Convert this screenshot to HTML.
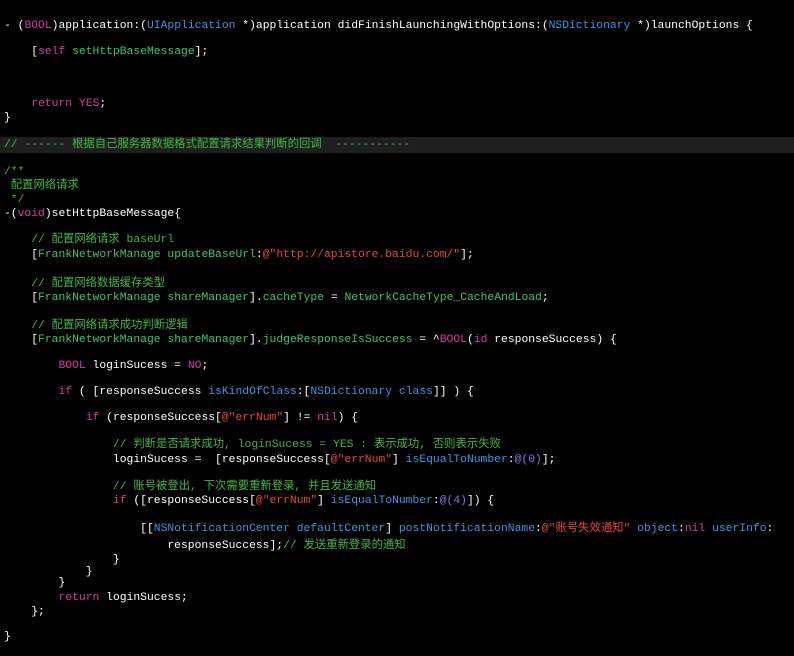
<!DOCTYPE html>
<html><head><meta charset="utf-8"><style>
body{margin:0;background:#000;width:794px;height:656px;overflow:hidden;position:relative;}
.l{position:absolute;left:4px;height:14px;line-height:14px;white-space:pre;font-family:"Liberation Mono","Noto Sans CJK SC",monospace;font-size:11.35px;color:#fff;}
.k{color:#d23d9e}.m{color:#3ec46f}.c{color:#41b645}.t{color:#3a95e0}.s{color:#e4463a}.n{color:#8b6fe0}
.band{position:absolute;left:0;top:137px;width:794px;height:16px;background:#1f1f1f;}
</style></head><body>
<div class="band"></div>
<div class="l" style="top:19px">- (<span class="k">BOOL</span>)application:(<span class="t">UIApplication</span> *)application didFinishLaunchingWithOptions:(<span class="t">NSDictionary</span> *)launchOptions {</div>
<div class="l" style="top:45px">    [<span class="k">self</span> <span class="m">setHttpBaseMessage</span>];</div>
<div class="l" style="top:97px">    <span class="k">return</span> <span class="k">YES</span>;</div>
<div class="l" style="top:111px">}</div>
<div class="l c" style="top:138px">// ------ 根据自己服务器数据格式配置请求结果判断的回调  -----------</div>
<div class="l c" style="top:165px">/**</div>
<div class="l c" style="top:179px"> 配置网络请求</div>
<div class="l c" style="top:193px"> */</div>
<div class="l" style="top:207px">-(<span class="k">void</span>)setHttpBaseMessage{</div>
<div class="l c" style="top:233px">    // 配置网络请求 baseUrl</div>
<div class="l" style="top:248px">    [<span class="m">FrankNetworkManage</span> <span class="m">updateBaseUrl</span>:<span class="s">@"http://apistore.baidu.com/"</span>];</div>
<div class="l c" style="top:277px">    // 配置网络数据缓存类型</div>
<div class="l" style="top:291px">    [<span class="m">FrankNetworkManage</span> <span class="m">shareManager</span>].<span class="m">cacheType</span> = <span class="m">NetworkCacheType_CacheAndLoad</span>;</div>
<div class="l c" style="top:319px">    // 配置网络请求成功判断逻辑</div>
<div class="l" style="top:333px">    [<span class="m">FrankNetworkManage</span> <span class="m">shareManager</span>].<span class="m">judgeResponseIsSuccess</span> = ^<span class="k">BOOL</span>(<span class="k">id</span> responseSuccess) {</div>
<div class="l" style="top:359px">        <span class="k">BOOL</span> loginSucess = <span class="k">NO</span>;</div>
<div class="l" style="top:385px">        <span class="k">if</span> ( [responseSuccess <span class="t">isKindOfClass</span>:[<span class="t">NSDictionary</span> <span class="t">class</span>]] ) {</div>
<div class="l" style="top:411px">            <span class="k">if</span> (responseSuccess[<span class="s">@"errNum"</span>] != <span class="k">nil</span>) {</div>
<div class="l c" style="top:438px">                // 判断是否请求成功, loginSucess = YES : 表示成功, 否则表示失败</div>
<div class="l" style="top:453px">                loginSucess =  [responseSuccess[<span class="s">@"errNum"</span>] <span class="t">isEqualToNumber</span>:<span class="n">@(0)</span>];</div>
<div class="l c" style="top:480px">                // 账号被登出, 下次需要重新登录, 并且发送通知</div>
<div class="l" style="top:494px">                <span class="k">if</span> ([responseSuccess[<span class="s">@"errNum"</span>] <span class="t">isEqualToNumber</span>:<span class="n">@(4)</span>]) {</div>
<div class="l" style="top:522px">                    [[<span class="t">NSNotificationCenter</span> <span class="t">defaultCenter</span>] <span class="t">postNotificationName</span>:<span class="s">@"账号失效通知"</span> <span class="t">object</span>:<span class="k">nil</span> <span class="t">userInfo</span>:</div>
<div class="l" style="top:539px">                        responseSuccess];<span class="c">// 发送重新登录的通知</span></div>
<div class="l" style="top:553px">                }</div>
<div class="l" style="top:565px">            }</div>
<div class="l" style="top:576px">        }</div>
<div class="l" style="top:591px">        <span class="k">return</span> loginSucess;</div>
<div class="l" style="top:605px">    };</div>
<div class="l" style="top:630px">}</div>
</body></html>
